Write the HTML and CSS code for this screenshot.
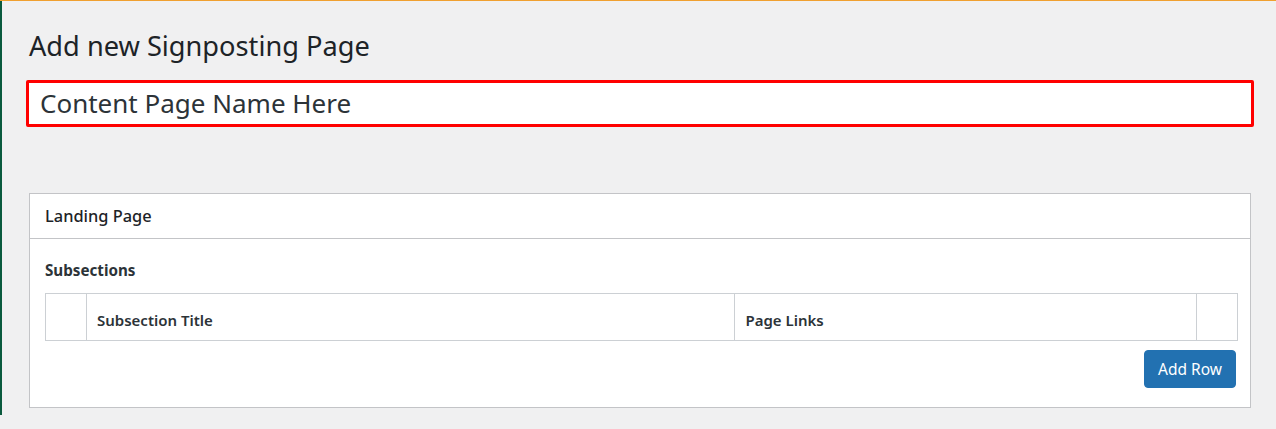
FILE: index.html
```html
<!DOCTYPE html>
<html>
<head>
<meta charset="utf-8">
<link rel="stylesheet" href="styles.css">
</head>
<body>
<div class="topline"></div>
<div class="layout">
  <div class="sidebar"></div>
  <main class="main">
    <h1 class="title">Add new Signposting Page</h1>
    <div class="title-input">Content Page Name Here</div>
    <section class="postbox">
      <h2 class="postbox-header">Landing Page</h2>
      <div class="postbox-body">
        <div class="label">Subsections</div>
        <table class="repeater">
          <tr>
            <th class="col-handle"></th>
            <th class="col-title">Subsection Title</th>
            <th class="col-links">Page Links</th>
            <th class="col-actions"></th>
          </tr>
        </table>
        <div class="actions">
          <button class="btn">Add Row</button>
        </div>
      </div>
    </section>
  </main>
</div>
</body>
</html>
```

FILE: styles.css
```css
* { box-sizing: border-box; }
html, body { margin: 0; padding: 0; }
body {
  background: #f0f0f1;
  font-family: "Noto Sans", "Open Sans", sans-serif;
  color: #1d2327;
  width: 1276px;
  height: 429px;
  overflow: hidden;
}
.topline { height: 1px; background: #f0a030; }
.layout { display: flex; align-items: flex-start; }
.sidebar { width: 2px; height: 414px; background: #0a5a3e; flex: none; }
.main { flex: 1; padding: 0 22px 0 24px; }
.title {
  margin: 26px 0 0 3px;
  font-size: 27.2px;
  font-weight: 400;
  line-height: 38px;
  color: #1d2327;
}
.title-input {
  margin-top: 15px;
  height: 47px;
  border: 3px solid #ff0000;
  border-radius: 2px;
  background: #fff;
  font-size: 26px;
  line-height: 41px;
  padding-left: 11px;
  color: #2c3338;
}
.postbox {
  margin: 66px 0 0 3px;
  width: 1222px;
  background: #fff;
  border: 1px solid #c3c4c7;
}
.postbox-header {
  margin: 0;
  height: 45px;
  border-bottom: 1px solid #c3c4c7;
  font-size: 16.4px;
  font-weight: 500;
  line-height: 44px;
  padding-left: 15px;
}
.postbox-body { padding: 21px 13px 19px 15px; }
.label {
  font-size: 15.2px;
  font-weight: 700;
  line-height: 20px;
  color: #2c3338;
}
.repeater {
  margin-top: 13px;
  width: 1193px;
  border-collapse: collapse;
  border: 1px solid #ccd0d4;
}
.repeater th {
  height: 47px;
  border-left: 1px solid #ccd0d4;
  text-align: left;
  font-size: 15px;
  font-weight: 600;
  padding: 6px 10px 0;
  color: #2c3338;
}
.col-handle { width: 41px; }
.col-title { width: 649px; }
.col-links { width: 462px; }
.col-actions { width: 41px; }
.actions { display: flex; justify-content: flex-end; margin-top: 9px; padding-right: 1px; }
.btn {
  width: 92px;
  height: 38px;
  background: #2271b1;
  border: 1px solid #2271b1;
  border-radius: 4px;
  color: #fff;
  font-family: "Noto Sans", "Open Sans", sans-serif;
  font-size: 15.5px;
  padding: 0;
}
```
